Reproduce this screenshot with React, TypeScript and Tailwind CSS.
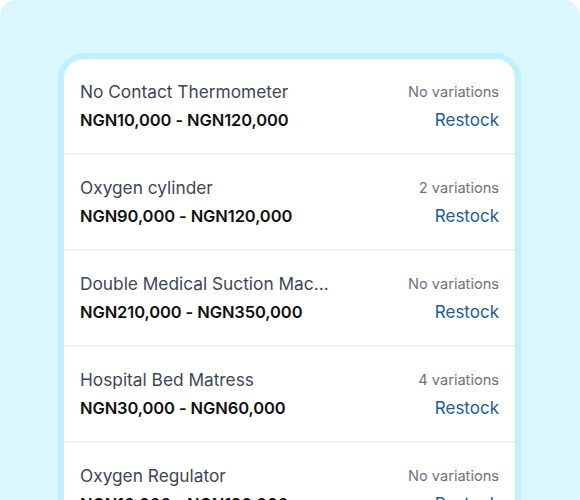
import React from 'react';

const products = [
  { name: 'No Contact Thermometer', price: 'NGN10,000 - NGN120,000', variations: 'No variations' },
  { name: 'Oxygen cylinder', price: 'NGN90,000 - NGN120,000', variations: '2 variations' },
  { name: 'Double Medical Suction Machine', price: 'NGN210,000 - NGN350,000', variations: 'No variations' },
  { name: 'Hospital Bed Matress', price: 'NGN30,000 - NGN60,000', variations: '4 variations' },
  { name: 'Oxygen Regulator', price: 'NGN10,000 - NGN120,000', variations: 'No variations' },
];

const App = () => {
  return (
    <div className="h-[500px] overflow-hidden bg-white" style={{ fontFamily: 'Inter, "Noto Sans", sans-serif' }}>
      <div className="h-[520px] rounded-[16px] bg-[#d9f7fd] pt-[53px] pl-[58px] pr-[59px]">
        <div className="rounded-[26px] border-[6px] border-[#bff0fc] bg-white overflow-hidden">
          {products.map((p, i) => (
            <div
              key={i}
              className="flex justify-between items-start px-4 pt-[21px] h-[96px] border-b-2 border-[#f0f0f0]"
            >
              <div className="min-w-0">
                <div className="text-[17.3px] leading-[24px] text-[#3c4658] truncate max-w-[250px]">{p.name}</div>
                <div className="mt-[4px] text-[16.5px] leading-[24px] font-semibold text-[#111111] tracking-[-0.1px]">{p.price}</div>
              </div>
              <div className="flex flex-col items-end shrink-0">
                <div className="text-[14.6px] leading-[24px] text-[#6b7280]">{p.variations}</div>
                <div className="mt-[4px] text-[17px] leading-[24px] text-[#1d5a9e]">Restock</div>
              </div>
            </div>
          ))}
        </div>
      </div>
    </div>
  );
};

export default App;
